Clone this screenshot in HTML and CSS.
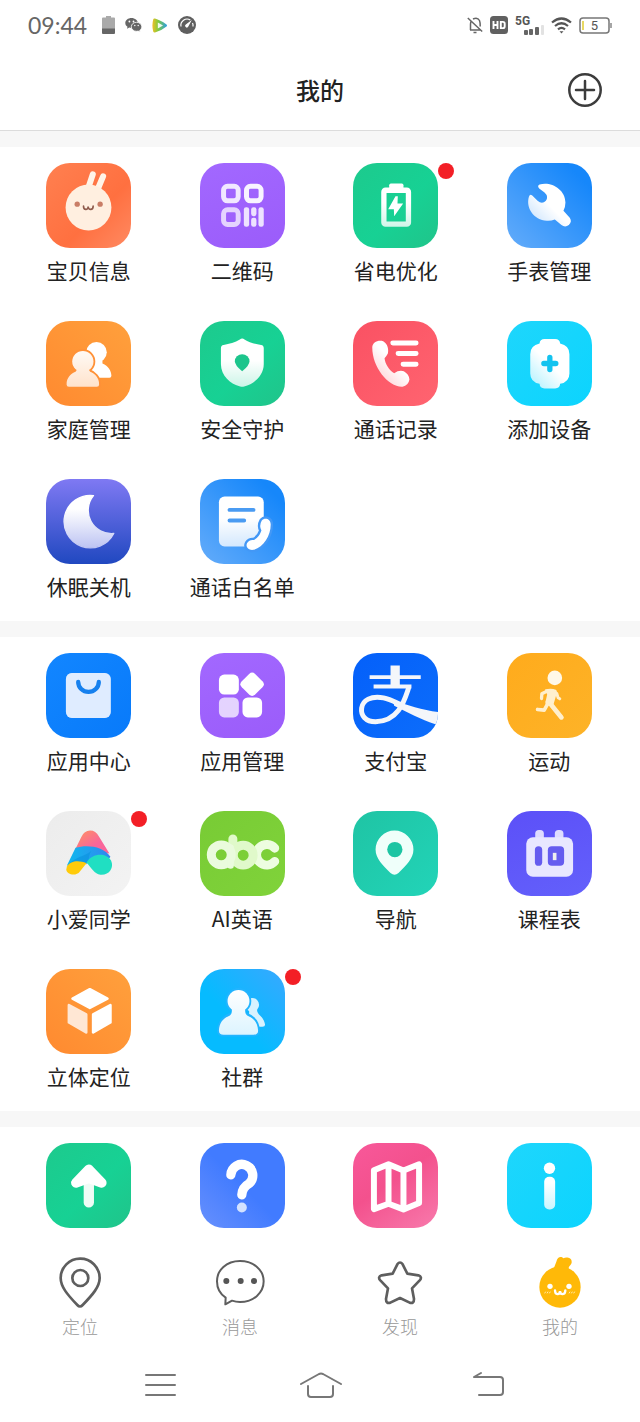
FILE: index.html
```html
<!DOCTYPE html>
<html lang="zh-CN">
<head>
<meta charset="utf-8">
<meta name="viewport" content="width=device-width, initial-scale=1">
<title>我的</title>
<link rel="stylesheet" href="styles.css">
</head>
<body>
<svg class="defs" width="0" height="0" aria-hidden="true">
  <defs>
    <linearGradient id="down" x1="0" y1="50" x2="0" y2="205" gradientUnits="userSpaceOnUse"><stop offset=".45" stop-color="#fff"/><stop offset="1" stop-color="#fff" stop-opacity=".76"/></linearGradient>
    <linearGradient id="corner" x1="190" y1="70" x2="70" y2="190" gradientUnits="userSpaceOnUse"><stop offset=".5" stop-color="#fff"/><stop offset="1" stop-color="#fff" stop-opacity=".68"/></linearGradient>
    <linearGradient id="member" x1="0" y1="90" x2="0" y2="200" gradientUnits="userSpaceOnUse"><stop offset="0" stop-color="#fffaf5"/><stop offset="1" stop-color="#ffe2cb"/></linearGradient>
    <linearGradient id="friend" x1="0" y1="60" x2="0" y2="200" gradientUnits="userSpaceOnUse"><stop offset="0" stop-color="#fff"/><stop offset="1" stop-color="#dcf4ff"/></linearGradient>
    <linearGradient id="moon" x1="0" y1="90" x2="0" y2="215" gradientUnits="userSpaceOnUse"><stop offset="0" stop-color="#fff"/><stop offset="1" stop-color="#b9c0f2"/></linearGradient>
    <linearGradient id="pink" x1="0" y1="0" x2="1" y2="1"><stop offset="0" stop-color="#ff9460"/><stop offset=".6" stop-color="#f9669a"/></linearGradient>
    <linearGradient id="blue" x1="0" y1="0" x2="1" y2="0"><stop offset="0" stop-color="#10b9ee"/><stop offset="1" stop-color="#3187ef"/></linearGradient>
    <linearGradient id="play" x1="0" y1="0" x2="1" y2="0"><stop offset="0" stop-color="#f0bf25"/><stop offset=".4" stop-color="#7fcb3d"/><stop offset="1" stop-color="#2b9ee8"/></linearGradient>
  </defs>
</svg>

<div class="status">
  <div class="status-group">
    <time class="clock">09:44</time>
    <svg viewBox="0 0 13 18" width="13" height="18"><path d="M4 0h5v1.500h3q1 0 1 1V13H0V2.500q0-1 1-1h3z" fill="#aaa"/><path d="M0 12.500h13V17q0 1-1 1H1q-1 0-1-1z" fill="#666"/></svg>
    <svg viewBox="0 0 17 16" width="17" height="16"><path d="M6.500 1C3 1 .3 3.200.3 6c0 1.600.8 2.900 2.200 3.800L2 11.700l2.300-1.100q1 .3 2.300.3C10 10.900 12.800 8.600 12.800 6S10 1 6.500 1z" fill="#666"/><path d="M11.500 5.300c-3 0-5.200 2-5.200 4.500s2.300 4.500 5.200 4.500l1.700-.2 2 1-.5-1.700c1.300-.8 2.100-2.100 2.100-3.600 0-2.500-2.300-4.500-5.300-4.500z" fill="#666" stroke="#fff" stroke-width=".8"/><g fill="#fff"><circle cx="4.400" cy="4.500" r=".9"/><circle cx="8.500" cy="4.500" r=".9"/><circle cx="9.800" cy="8.500" r=".7"/><circle cx="13.200" cy="8.500" r=".7"/></g></svg>
    <svg viewBox="0 0 16 15" width="16" height="15"><path d="M1.200 1.500Q1.500.3 3 .6 8 2 14.500 6.500q1 1 0 2Q9 13 3 14.500q-1.400.2-1.800-1.100Q-.4 7.500 1.200 1.500z" fill="url(#play)"/><path d="M5.800 4.600 11 7.500 5.800 10.500z" fill="#fff" opacity=".9"/></svg>
    <svg viewBox="0 0 18 18" width="18" height="18"><circle cx="9" cy="9" r="9" fill="#5f5f5f"/><path d="M3 10.500a6.200 6.200 0 0 1 9.300-6.500M14.500 7q.8 1.700.5 3.500" fill="none" stroke="#fff" stroke-width="1.200"/><path d="M13.800 4 10.300 10.600a1.700 1.700 0 1 1-2.500-2.200z" fill="#fff"/></svg>
  </div>
  <div class="status-group">
    <svg viewBox="0 0 16 18" width="16" height="18" fill="none" stroke="#666" stroke-width="1.500"><path d="M3 14h11M3.500 14V8q0-2 1-3.200M6 3q4.500-2.200 6.500 1.500.7 1.500.7 6M.8 2 15.200 15.500M6.500 16.500h3"/></svg>
    <svg viewBox="0 0 18 18" width="18" height="18"><rect width="18" height="18" rx="3.500" fill="#606060"/><path d="M3.500 5v8M7.500 5v8M3.500 9h4M10.800 5.900h2q1.900 0 1.900 1.900v2.400q0 1.900-1.900 1.900h-2z" fill="none" stroke="#fff" stroke-width="1.900"/></svg>
    <div class="signal"><span>5G</span><svg viewBox="0 0 21 10" width="21" height="10"><g fill="#666"><rect x="1" y="5" width="4" height="5" rx="1"/><rect x="6" y="4" width="4" height="6" rx="1"/><rect x="12" y="2" width="4" height="8" rx="1"/></g><rect x="18" width="3" height="10" rx="1" fill="#e2e2e2"/></svg></div>
    <svg viewBox="0 0 21 17" width="21" height="17" fill="none" stroke="#555" stroke-width="2.200"><path d="M1 5.500q9.500-8 19 0M4 9q6.500-5.500 13 0M7 12.300q3.500-3 7 0"/><path d="M8.500 14.200h4l-2 2.300z" fill="#555" stroke="none"/></svg>
    <svg viewBox="0 0 33 17" width="33" height="17"><rect x="1" y="1" width="29" height="15" rx="3" fill="none" stroke="#777" stroke-width="1.500"/><path d="M32 6v5" stroke="#888" stroke-width="1.500"/><path d="M4 4v9" stroke="#e3cf3c" stroke-width="1.600"/><text class="charge" x="15.500" y="13" text-anchor="middle">5</text></svg>
  </div>
</div>

<header class="header">
  <h1>我的</h1>
  <button class="add" type="button" aria-label="添加"><svg viewBox="0 0 34 34" width="34" height="34" fill="none" stroke="#3c3c3c" stroke-linecap="round"><circle cx="17" cy="17" r="15.700" stroke-width="2.500"/><path d="M17 8v18M8 17h18" stroke-width="2.500"/></svg></button>
</header>

<main>
  <section class="group">
    <a class="app" href="#"><span class="tile baby"><svg viewBox="0 0 256 256"><g stroke="#fff4e8" stroke-width="18" stroke-linecap="round"><path d="M127 76 141 34M157 76l15-36"/></g><circle cx="128" cy="134" r="69" fill="#ffefe0"/><g fill="#c97d66"><circle cx="94" cy="124" r="8"/><circle cx="163" cy="124" r="8"/></g><path d="M113 130c0 13 14 13 14 1 0 12 15 12 15-1" fill="none" stroke="#8f5b4c" stroke-width="5" stroke-linecap="round"/></svg></span><span>宝贝信息</span></a>
    <a class="app" href="#"><span class="tile purple"><svg viewBox="0 0 256 256"><g fill="none" stroke="#fff" stroke-width="15"><rect x="71" y="70" width="44" height="44" rx="12" opacity=".85"/><rect x="140" y="70" width="44" height="44" rx="12" opacity=".93"/><rect x="71" y="141" width="44" height="44" rx="12" opacity=".72"/></g><g fill="#fff" opacity=".82"><rect x="132" y="133" width="16" height="59" rx="7"/><rect x="154" y="133" width="16" height="27" rx="7"/><rect x="154" y="165" width="16" height="27" rx="7"/><rect x="176" y="133" width="16" height="59" rx="7"/></g></svg></span><span>二维码</span></a>
    <a class="app" href="#"><span class="tile green"><svg viewBox="0 0 256 256"><rect x="109" y="62" width="43" height="20" rx="5" fill="#fff"/><rect x="93" y="82" width="74" height="102" rx="5" fill="none" stroke="url(#down)" stroke-width="16"/><path d="M128 100 106 139h17l1 21 27-38h-17l1-22z" fill="#fff"/></svg><i class="badge"></i></span><span>省电优化</span></a>
    <a class="app" href="#"><span class="tile azure"><svg viewBox="0 0 256 256"><path d="M98 65C130 54 176 78 176 119Q176 132 170 144L189 165Q197 177 186 187 175 196 164 187L144 170Q132 175 120 174C80 172 56 135 66 102Q69 92 76 98L92 114Q106 126 117 114 126 101 113 89L97 77Q90 69 98 65Z" fill="url(#corner)"/></svg></span><span>手表管理</span></a>
    <a class="app" href="#"><span class="tile orange"><svg viewBox="0 0 256 256"><g fill="#fff"><circle cx="152" cy="94" r="31"/><path d="M128 116h42v12c18 8 27 22 27 37q0 6-6 6h-63z"/></g><g fill="#ff9137" stroke="#ff9137" stroke-width="11"><path d="M62 191c0-20 13-35 32-41h34c19 6 32 21 32 41q0 7-7 7H69q-7 0-7-7z"/><circle cx="111" cy="122" r="32"/></g><g fill="url(#member)"><path d="M62 191c0-20 13-33 27-38q5-3 4-12h36q-1 9 4 12c14 5 27 18 27 38q0 7-7 7H69q-7 0-7-7z"/><circle cx="111" cy="122" r="32"/></g></svg></span><span>家庭管理</span></a>
    <a class="app" href="#"><span class="tile green"><svg viewBox="0 0 256 256"><path d="M120 56q7-6 14 0c14 9 32 14 50 16q8 1 8 10v48c0 34-30 60-59 67q-6 2-12 0c-29-7-58-33-58-67V82q0-9 8-10c17-2 35-7 49-16z" fill="url(#down)"/><path d="M127 151q-22-17-22-30a22 21 0 0 1 44 0q0 13-22 30z" fill="#1cc58c"/></svg></span><span>安全守护</span></a>
    <a class="app" href="#"><span class="tile red"><svg viewBox="0 0 256 256"><path d="M58 80c0-16 18-24 33-19 14 8 17 26 14 37q-4 8-10 14c2 18 14 36 29 45q14-10 29-6 16 9 17 25-3 18-21 22C107 200 58 140 58 80z" fill="url(#corner)"/><path d="M120 66h70M136 98h54M151 130h39" stroke="#fff" stroke-width="15" stroke-linecap="round"/></svg></span><span>通话记录</span></a>
    <a class="app" href="#"><span class="tile cyan"><svg viewBox="0 0 256 256"><path d="M98 68q1-14 15-14h32q14 0 15 14 28 6 28 32v58q0 26-28 31-1 14-15 14h-32q-14 0-15-14-28-5-28-31v-58q0-26 28-32z" fill="url(#corner)"/><path d="M129 110v36M111 128h36" stroke="#13c3ef" stroke-width="16" stroke-linecap="round"/></svg></span><span>添加设备</span></a>
    <a class="app" href="#"><span class="tile night"><svg viewBox="0 0 256 256"><path d="M143 50A79 79 0 1 0 204 164 70 70 0 0 1 143 50z" fill="url(#moon)" stroke="url(#moon)" stroke-width="4" stroke-linejoin="round"/></svg></span><span>休眠关机</span></a>
    <a class="app" href="#"><span class="tile azure"><svg viewBox="0 0 256 256"><rect x="57" y="53" width="135" height="150" rx="17" fill="url(#down)"/><path d="M89 93h72M89 125h44" stroke="#4a9bf2" stroke-width="12" stroke-linecap="round"/><path d="M186 125c8-10 27-6 27 12 0 34-22 68-51 76-16 3-26-9-20-20q7-11 20-9 16-8 23-29-8-14 1-30z" fill="#fff" stroke="#4398f6" stroke-width="14" stroke-linejoin="round" paint-order="stroke"/></svg></span><span>通话白名单</span></a>
  </section>

  <section class="group">
    <a class="app" href="#"><span class="tile blue"><svg viewBox="0 0 256 256"><rect x="60" y="60" width="135" height="136" rx="18" fill="#fff"/><rect x="60" y="60" width="135" height="136" rx="18" fill="#b9d4ff" opacity=".45"/><path d="M97 87a31 30 0 0 0 62 0" fill="none" stroke="#1680ee" stroke-width="13" stroke-linecap="round"/></svg></span><span>应用中心</span></a>
    <a class="app" href="#"><span class="tile purple"><svg viewBox="0 0 256 256" fill="#fff"><rect x="57" y="65" width="60" height="60" rx="16"/><path d="M148 63q9-9 18 0l22 22q9 9 0 18l-22 22q-9 9-18 0l-22-22q-9-9 0-18z"/><rect x="57" y="134" width="60" height="60" rx="16" opacity=".72"/><rect x="128" y="134" width="59" height="60" rx="16"/></svg></span><span>应用管理</span></a>
    <a class="app" href="#"><span class="tile pay"><svg viewBox="0 0 256 256"><g fill="#f4f6fa"><path d="M113 38h28v58h-28zM50 67h154v11H50zM62 95h114v12H62z"/><path d="M120 140c42 18 90 31 136 38v34l-10 2c-40-13-82-35-122-55z"/></g><path d="M168 104C156 138 140 206 68 207 38 207 23 188 26 166c3-24 28-38 66-31 24 5 36 14 60 24" fill="none" stroke="#f4f6fa" stroke-width="15"/></svg></span><span>支付宝</span></a>
    <a class="app" href="#"><span class="tile amber"><svg viewBox="0 0 256 256"><circle cx="144" cy="75" r="22" fill="#fff8e8"/><g fill="none" stroke="#ffefcd" stroke-linecap="round" stroke-linejoin="round"><path d="M122 114 105 123l-1 14" stroke-width="10"/><path d="M150 122l4 13 5 3" stroke-width="9"/><path d="M122 154l-10 18-20-2" stroke-width="11"/><path d="M130 152l34 42" stroke-width="14"/></g><path d="M114 110q20-5 33 1 5 3 3 10l-10 34-18 4q-10-7-5-17l4-17z" fill="#ffefcd"/></svg></span><span>运动</span></a>
    <a class="app" href="#"><span class="tile silver"><svg viewBox="0 0 256 256"><path d="M88 116 106 79q9-20 27-20 17 0 26 17l32 52z" fill="url(#pink)"/><path d="M89 111c33-10 85-5 105 27l-20 28-48-10-63 8z" fill="url(#blue)"/><path d="M62 168c22-30 57-31 75-48-13 17-3 30-14 40-18-12-42-12-61 8z" fill="#0a94df" opacity=".65"/><path d="M122 155c18-30 60-30 74-6 10 22-6 45-32 43-18-2-28-22-42-37z" fill="#20dfc2"/><path d="M63 167c12-19 37-19 59-10l-20 25c-10 15-39 11-41-5z" fill="#ffcb0a"/></svg><i class="badge"></i></span><span>小爱同学</span></a>
    <a class="app" href="#"><span class="tile lime"><svg viewBox="0 0 256 256" fill="none" stroke-width="27" stroke-linecap="round"><path d="M225 112A31 31 0 1 0 225 152" stroke="#edfde0"/><g stroke="#e0f9ca"><path d="M99 84v60"/><circle cx="130" cy="133" r="30"/></g><g stroke="#eafbdd"><circle cx="64" cy="132" r="30"/><path d="M92 111v53" stroke-width="20"/></g></svg></span><span>AI英语</span></a>
    <a class="app" href="#"><span class="tile teal"><svg viewBox="0 0 256 256"><path d="M125 59a57 57 0 0 1 57 57c0 28-23 49-45 71q-12 10-24 0c-22-22-45-43-45-71a57 57 0 0 1 57-57z" fill="#effffa"/><circle cx="126" cy="116" r="23" fill="#1dc5a3"/></svg></span><span>导航</span></a>
    <a class="app" href="#"><span class="tile indigo"><svg viewBox="0 0 256 256"><g fill="#dedcff"><rect x="85" y="57" width="26" height="40" rx="11"/><rect x="144" y="57" width="26" height="40" rx="11"/></g><rect x="58" y="79" width="141" height="119" rx="20" fill="#e8e7ff"/><g fill="#655cef"><rect x="84" y="106" width="22" height="59" rx="11"/><rect x="123" y="106" width="49" height="59" rx="12"/></g><rect x="138" y="126" width="11" height="22" fill="#eee"/></svg></span><span>课程表</span></a>
    <a class="app" href="#"><span class="tile orange"><svg viewBox="0 0 256 256" stroke-linejoin="round" stroke-width="8"><path d="M132 61 185 89 132 117 80 89z" fill="#fff" stroke="#fff"/><path d="M69 109 121 137v54L69 161z" fill="#ffe7d4" stroke="#ffe7d4"/><path d="M142 137 194 109v52l-52 30z" fill="#fff" stroke="#fff"/></svg></span><span>立体定位</span></a>
    <a class="app" href="#"><span class="tile sky"><svg viewBox="0 0 256 256"><g fill="#d7f2ff"><circle cx="157" cy="108" r="21"/><path d="M148 122h24q-1 8 5 14c12 10 18 22 19 32q0 6-8 6h-40z"/></g><g fill="#22b4ff" stroke="#22b4ff" stroke-width="11"><path d="M57 186c1-27 15-42 38-50h42c23 8 37 23 38 50q0 12-14 12H71q-14 0-14-12z"/><circle cx="116" cy="96" r="33"/></g><g fill="url(#friend)"><path d="M57 186c1-26 14-38 33-46q7-4 6-20h40q-1 16 6 20c19 8 32 20 33 46q0 12-14 12H71q-14 0-14-12z"/><circle cx="116" cy="96" r="33"/></g></svg><i class="badge"></i></span><span>社群</span></a>
  </section>

  <section class="group">
    <a class="app" href="#" aria-label="升级"><span class="tile green"><svg viewBox="0 0 256 256"><path d="M129 90v89" stroke="#effcf6" stroke-width="31" stroke-linecap="round" fill="none"/><path d="M90 120 129 79l39 41-39-14z" fill="#fff" stroke="#fff" stroke-width="29" stroke-linejoin="round"/></svg></span></a>
    <a class="app" href="#" aria-label="帮助"><span class="tile royal"><svg viewBox="0 0 256 256"><path d="M93 96A33 33 0 1 1 148 122Q127 134 126 156" fill="none" stroke="#fff" stroke-width="28" stroke-linecap="round"/><circle cx="126" cy="194" r="15" fill="#d3e2ff"/></svg></span></a>
    <a class="app" href="#" aria-label="地图"><span class="tile rose"><svg viewBox="0 0 256 256"><path d="M63 82 107 64 152 83 199 64V181L152 200 107 183 63 199zM107 64V183M152 83V200" fill="none" stroke="#fff" stroke-width="18" stroke-linejoin="round"/></svg></span></a>
    <a class="app" href="#" aria-label="关于"><span class="tile cyan"><svg viewBox="0 0 256 256"><circle cx="128" cy="76" r="17" fill="#fff"/><rect x="112" y="102" width="33" height="98" rx="15" fill="url(#down)"/></svg></span></a>
  </section>
</main>

<nav class="tabs">
  <a href="#"><svg viewBox="0 0 156 156" fill="none" stroke="#5e5e5e" stroke-width="8"><path d="M78 8A58 58 0 0 0 20 66C20 92 40 116 70 147Q78 156 86 147C116 116 137 92 137 66A58 58 0 0 0 78 8z"/><circle cx="79" cy="66" r="24"/></svg><span>定位</span></a>
  <a href="#"><svg viewBox="0 0 156 156"><path d="M78 15C37 15 9 42 9 76c0 22 9 38 26 49l-1 20 20-11q12 4 24 4c41 0 71-28 71-62S119 15 78 15z" fill="none" stroke="#5e5e5e" stroke-width="6" stroke-linejoin="round"/><g fill="#555"><circle cx="37" cy="75" r="9"/><circle cx="80" cy="75" r="9"/><circle cx="120" cy="75" r="9"/></g></svg><span>消息</span></a>
  <a href="#"><svg viewBox="0 0 156 156"><path d="M70 25Q78 14 86 25L100 53 133 58Q146 63 137 73L114 97 120 129Q120 144 107 140L78 126 49 140Q36 144 36 129L42 97 19 73Q10 63 23 58L56 53z" fill="none" stroke="#5e5e5e" stroke-width="8" stroke-linejoin="round"/></svg><span>发现</span></a>
  <a href="#" aria-current="page"><svg viewBox="0 0 156 156"><path d="M55 42Q62 33 67 17C71 0 83 1 88 7 98 2 113 6 113 17 114 27 102 29 104 40z" fill="#ffb908"/><circle cx="78" cy="93" r="62" fill="#ffb908"/><g fill="#fff"><circle cx="48" cy="91" r="8"/><circle cx="105" cy="91" r="8"/></g><path d="M63 103c0 15 14 15 15 2 1 13 16 13 16-2" fill="none" stroke="#fff" stroke-width="7" stroke-linecap="round"/><path d="M32 112l3-5M39 112l3-5M46 112l3-5M105 112l3-5M112 112l3-5M119 112l3-5" stroke="#ffecae" stroke-width="3"/></svg><span>我的</span></a>
</nav>

<div class="system">
  <button type="button" aria-label="最近任务"><svg viewBox="0 0 60 30" width="60" height="30"><path d="M16 4h29M16 14h29M16 24h29"/></svg></button>
  <button type="button" aria-label="主屏幕"><svg viewBox="0 0 60 30" width="60" height="30"><path d="M11 13 29 3q2-1 4 0l18 10M18 15v8q0 3 3 3h19q3 0 3-3v-8"/></svg></button>
  <button type="button" aria-label="返回"><svg viewBox="0 0 60 30" width="60" height="30"><path d="M31 2 24 6h26q3 0 3 3v12q0 3-3 3H29"/></svg></button>
</div>
</body>
</html>
```
FILE: styles.css
```css
* { box-sizing: border-box; }
body {
  margin: 0;
  min-height: 100vh;
  display: flex;
  flex-direction: column;
  background: #fff;
  color: #222;
  font-family: "Noto Sans CJK SC", "Noto Sans", sans-serif;
}
svg { display: block; }
a { color: inherit; text-decoration: none; }
button { padding: 0; border: 0; background: none; }
.defs { position: absolute; }

.status {
  height: 50px;
  padding: 0 28px;
  display: flex;
  justify-content: space-between;
  align-items: center;
}
.status-group { display: flex; align-items: center; gap: 10px; }
.status-group:last-child { gap: 7px; }
.clock {
  font: 23px/30px Lato, sans-serif;
  color: #666;
  margin-right: 5px;
}
.signal { width: 29px; height: 20px; position: relative; }
.signal span { display: block; font: bold 12px/12px Roboto, sans-serif; color: #555; }
.signal svg { position: absolute; right: 0; bottom: 0; }
.charge { font: 13px Roboto, sans-serif; fill: #555; }

.header {
  height: 81px;
  padding: 0 38px;
  display: grid;
  grid-template-columns: 1fr auto 1fr;
  align-items: center;
  border-bottom: 1px solid #dcdcdc;
}
h1 {
  grid-column: 2;
  margin: 0;
  font-size: 24px;
  line-height: 36px;
  font-weight: 500;
}
.add { justify-self: end; }

main { flex: 1; }
.group {
  border-top: 16px solid #f7f7f7;
  padding: 16px 14px 20px 12px;
  display: grid;
  grid-template-columns: repeat(4, 1fr);
  row-gap: 36px;
}
.app {
  display: flex;
  flex-direction: column;
  align-items: center;
  gap: 7px;
  font-size: 21px;
  line-height: 30px;
  white-space: nowrap;
}
.tile { position: relative; width: 85px; height: 85px; border-radius: 24px; }
.tile svg { width: 100%; height: 100%; border-radius: 24px; }
.badge {
  position: absolute;
  left: 100%;
  top: 0;
  width: 16px;
  height: 16px;
  border-radius: 50%;
  background: #f31f26;
}
.baby { background: linear-gradient(135deg, #ff8050, #ff7040 60%, #ff8a62); }
.purple { background: linear-gradient(160deg, #a268ff, #9b5cfa); }
.green { background: linear-gradient(135deg, #1dca8d, #17d194 55%, #20c48a); }
.azure { background: linear-gradient(45deg, #64acfa, #1687fa 85%); }
.orange { background: linear-gradient(45deg, #ff8a30, #ffa03c); }
.red { background: linear-gradient(135deg, #fa5163, #ff6470); }
.cyan { background: linear-gradient(135deg, #1ed6fc, #0cd4fe); }
.night { background: linear-gradient(#7f79f3, #2048c0); }
.blue { background: linear-gradient(135deg, #1286ff, #087afa); }
.pay { background: linear-gradient(135deg, #0460fa, #0c6dfb); }
.amber { background: linear-gradient(135deg, #ffab1c, #fdb328); }
.silver { background: linear-gradient(135deg, #ececec, #f3f3f3); }
.lime { background: linear-gradient(135deg, #78cb35, #80d33a); }
.teal { background: linear-gradient(135deg, #1fc4a4, #22d4b8); }
.indigo { background: linear-gradient(160deg, #5c50f8, #6360fb); }
.sky { background: linear-gradient(45deg, #06bbff 40%, #38a8ff); }
.royal { background: linear-gradient(45deg, #6790fd, #417bff 50%); }
.rose { background: linear-gradient(145deg, #f8589a, #f3518d 45%, #f87aac); }

.tabs {
  padding: 8px 0 10px;
  display: grid;
  grid-template-columns: repeat(4, 1fr);
  background: #fff;
}
.tabs a {
  display: flex;
  flex-direction: column;
  align-items: center;
  gap: 6px;
  font-size: 18px;
  line-height: 24px;
  font-weight: 300;
  color: #999;
}
.tabs svg { width: 52px; height: 52px; }

.system {
  height: 75px;
  padding: 0 80px;
  display: grid;
  grid-template-columns: repeat(3, 1fr);
  place-items: center;
}
.system svg { fill: none; stroke: #777; stroke-width: 2; stroke-linecap: round; stroke-linejoin: round; }
```
